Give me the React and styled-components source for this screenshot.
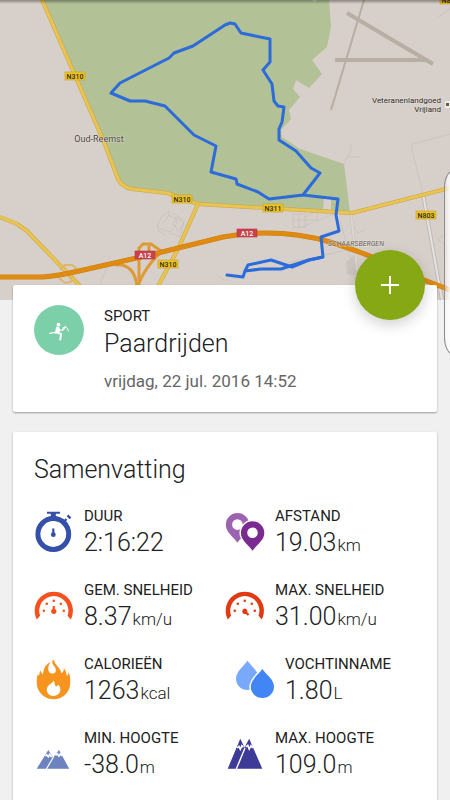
import React from 'react';
import styled, { createGlobalStyle } from 'styled-components';

const GlobalStyle = createGlobalStyle`
    * {
        box-sizing: border-box;
    }
    body {
        margin: 0;
        background-color: #f0f0f0;
        color: #212121;
        font-family: Roboto, "Liberation Sans", sans-serif;
    }
`

const Page = styled.div`
    position: relative;
    display: flex;
    flex-direction: column;
    min-height: 100vh;
    overflow: hidden;
`

const MapArea = styled.div`
    height: 300px;
    background-color: #d7cfc9;
`

const MapDrawing = styled.svg`
    display: block;
    width: 100%;
    height: 100%;
`

const Content = styled.main`
    position: relative;
    display: flex;
    flex: 1;
    flex-direction: column;
    gap: 20px;
    margin-top: -15px;
    padding: 0 13px;
`

const Card = styled.section`
    position: relative;
    padding: 20px 21px;
    flex: ${({grow}) => grow ? '1' : 'none' };
    border-radius: ${({grow}) => grow ? '2px 2px 0 0' : '2px' };
    background-color: #ffffff;
    box-shadow: 0 1px 2px rgba(0, 0, 0, 0.36);
`

const ActivityCard = styled(Card)`
    display: flex;
    align-items: flex-start;
    gap: 20px;
`

const SummaryCard = styled(Card)`
    padding-bottom: 16px;
`

const SportBadge = styled.svg`
    flex: none;
    width: 50px;
    height: 50px;
`

const SportLabel = styled.p`
    margin: 0;
    font-size: 15px;
    line-height: 22px;
`

const Title = styled.h1`
    margin: 0;
    font-size: 25px;
    font-weight: 300;
    line-height: 34px;
`

const DateText = styled.p`
    margin: 9px 0 0;
    color: #666666;
    font-size: 17px;
    line-height: 22px;
`

const AddButton = styled.button`
    position: absolute;
    top: -35px;
    right: 12px;
    display: flex;
    align-items: center;
    justify-content: center;
    width: 70px;
    height: 70px;
    padding: 0;
    border: none;
    border-radius: 50%;
    background-color: #86a814;
    box-shadow: 0 5px 14px rgba(0, 0, 0, 0.18);
    cursor: pointer;
`

const SectionTitle = styled.h2`
    margin: 0 0 18px;
    font-size: 25px;
    font-weight: 300;
    line-height: 36px;
`

const StatGrid = styled.div`
    display: grid;
    grid-template-columns: 1fr 1fr;
    row-gap: 20px;
`

const StatItem = styled.div`
    display: flex;
    gap: 10px;
    padding-left: ${({inset}) => inset ? '10px' : '0' };
`

const StatIcon = styled.svg`
    flex: none;
    width: 40px;
    height: 54px;
`

const StatLabel = styled.p`
    margin: 0;
    font-size: 15px;
    line-height: 20px;
    white-space: nowrap;
`

const StatValue = styled.p`
    margin: 0;
    font-size: 25px;
    font-weight: 300;
    line-height: 34px;
    white-space: nowrap;
`

const Unit = styled.span`
    margin-left: 1px;
    font-size: 17px;
    line-height: 20px;
`

// edge panel that peeks in from the right side of the screen
const EdgeHandle = styled.div`
    position: absolute;
    top: 170px;
    right: -14px;
    width: 20px;
    height: 185px;
    border: 1px solid #8c8c8c;
    border-radius: 14px / 24px;
    background-image: linear-gradient(to right, rgba(255, 255, 255, 0.4), #ffffff 6px);
`

const ROUTE = 'M227 275L243 277L245 271L261 269H281L290 266L309 260L323 257L321 237L339 231L336 215L338 199L303 195L269 199L258 192L237 184L236 179L211 172L216 146L194 135L165 106L145 101H130L111 93L120 83L169 58L174 53L193 46L225 25L230 23L235 24L241 33L270 39V62L263 70L272 84L274 101L278 106L284 107L282 122L279 129V140L296 151L311 168L320 173L303 195'

function RoadSign({x, y, name, red}) {
    return (
    <g>
      <rect x={x - 10} y={y - 4} width="20" height="8" fill={red ? '#c8414b' : '#ecc428'} stroke={red ? '#b93a43' : '#c9a21c'} strokeWidth="0.6" />
      <text x={x} y={y + 3} fontSize="7" fontWeight="500" textAnchor="middle" fill={red ? '#ffffff' : '#2f2a14'}>{name}</text>
    </g>
    );
}

function Road({d, width, main}) {
    return (
    <g fill="none" strokeLinejoin="round">
      <path d={d} stroke={main ? '#c98013' : '#c9a448'} strokeWidth={width} />
      <path d={d} stroke={main ? '#e08a10' : '#eac450'} strokeWidth={width - 1} />
    </g>
    );
}

function RouteMap() {
    return (
    <MapDrawing viewBox="0 0 450 300" preserveAspectRatio="xMidYMid slice" role="img" aria-label="Route">
      <defs>
        <linearGradient id="topShade" x1="0" y1="0" x2="0" y2="1">
          <stop offset="0" stopColor="#000000" stopOpacity="0.35" />
          <stop offset="1" stopColor="#000000" stopOpacity="0" />
        </linearGradient>
      </defs>
      <rect width="450" height="300" fill="#d7cfc9" />
      <path d="M42 0H329L331 27L327 47L312 60L322 74L309 88L296 80L293 89L300 97L289 110L291 119L281 130L282 137L300 149L344 164L350 213L300 209L198 204L165 193L130 189L121 182L104 142Z" fill="#b2c196" />
      <path d="M312 0h6l-4 2zM324 198h7v12l-8-1z" fill="#d7cfc9" />

      <g fill="none" stroke="#b9aea3">
        <path d="M364 0L331 110" strokeWidth="2" />
        <path d="M347 13L433 64" strokeWidth="4" />
        <path d="M335 60H428" strokeWidth="4" />
      </g>
      <g fill="none" stroke="#c4bcb6" strokeWidth="0.6">
        <path d="M438 17L450 9M412 150V144L450 134M349 144l3 2-2 4M344 164l7-14M346 157h14" />
        <path d="M169 211v5l7 2 1 5-6 9-7-2-7-3 5-11zM169 215l-6 9M177 217l7 7-5 7-6-7zM173 213l11 8-4 16-11-4M157 230l10 6M109 262l-9 22M216 274l9 7" />
        <path d="M293 214h12v13h-12zM299 214v13M293 220h24v-7M305 217l8-4M297 229l42-17M354 226l4 7 7-3M340 220l12 44 5 25M284 264l72-16M450 232l-13 7 9 6v14M412 150l11 43" />
      </g>
      <path d="M346 262l10-8 4 22-13-2z" fill="#cbc3be" />
      <path d="M423 194L442 300" stroke="#bfb9b5" strokeWidth="4" />
      <path d="M423 194L442 300" stroke="#e6e2df" strokeWidth="2" />
      <path d="M351 213L357 270" stroke="#c6bfba" strokeWidth="3" />
      <path d="M351 213L357 270" stroke="#ddd7d2" strokeWidth="2" />

      <Road width={4} d="M42 0L104 142L118 179Q122 187 132 189L167 193L198 204L352 213L450 188" />
      <Road width={4} d="M0 217L17 224L27 231L80 286V300" />
      <Road width={4} d="M198 204L178 249L157 288" />
      <g fill="none" stroke="#dfb56d" strokeWidth="2">
        <path d="M60 270l5-5h7l5 4M58 277l7 6 6-1 1-6" />
      </g>
      <g fill="none" stroke="#dd9a35" strokeWidth="3">
        <path d="M115 265Q134 263 137 286" />
        <path d="M149 257V244" />
        <path d="M161 252Q146 266 139 283" />
        <path d="M161 251L151 244H143L139 248V300" />
      </g>
      <Road main width={5} d="M0 277H43Q57 276 79 271L154 254L223 237Q278 227 330 242Q378 257 416 277L450 290" />

      <path d={ROUTE} fill="none" stroke="#2c6bda" strokeWidth="3" strokeLinejoin="round" strokeLinecap="round" />
      <path d="M245 271L248 265L271 260L292 267L309 260L323 257" fill="none" stroke="#2c6bda" strokeWidth="3" strokeLinejoin="round" />

      <RoadSign x={75} y={76} name="N310" />
      <RoadSign x={182} y={199} name="N310" />
      <RoadSign x={168} y={264} name="N310" />
      <RoadSign x={273} y={208} name="N311" />
      <RoadSign x={426} y={215} name="N803" />
      <RoadSign x={450} y={0} name="N803" />
      <RoadSign x={145} y={255} name="A12" red />
      <RoadSign x={247} y={233} name="A12" red />

      <g stroke="#efebe8" strokeWidth="1" paintOrder="stroke" strokeOpacity="0.6">
        <text x="99" y="142" fontSize="9" fill="#4c433d" textAnchor="middle">Oud-Reemst</text>
        <text x="441" y="103" fontSize="8" fill="#2c2723" textAnchor="end">Veteranenlandgoed</text>
        <text x="441" y="112" fontSize="8" fill="#2c2723" textAnchor="end">Vrijland</text>
        <text x="356" y="246" fontSize="7" fill="#625a53" fontStyle="italic" textAnchor="middle">SCHAARSBERGEN</text>
      </g>
      <rect x="445" y="101" width="8" height="7" rx="1" fill="#efebe8" />
      <rect x="446" y="103" width="3" height="3" fill="#6b5d3f" />
      <rect width="450" height="4" fill="url(#topShade)" />
    </MapDrawing>
    );
}

function Stopwatch() {
    return (
    <g>
      <circle cx="19.3" cy="28" r="15.4" fill="none" stroke="#3450a8" strokeWidth="5" />
      <path d="M13 5.7h13v2.1h-4.2V12h-5V7.8H13z" fill="#3450a8" />
      <path d="M29 16.5l3.5-3.5M33.5 9.3l3 3" stroke="#3450a8" strokeWidth="2.4" />
      <path d="M28 13.5l5 4.5" stroke="#3450a8" strokeWidth="2.4" />
      <circle cx="19.3" cy="28.7" r="2.4" fill="#3450a8" />
      <path d="M19.3 22.5v6" stroke="#3450a8" strokeWidth="2.2" />
    </g>
    );
}

function Gauge({color, angle = 0}) {
    return (
    <g fill={color}>
      <path d="M2.8 39.5A19.1 19.1 0 1 1 36.8 39.5L33.5 35.7A14.6 14.6 0 1 0 6.1 35.7Z" />
      <circle cx="9.8" cy="30.8" r="1.3" />
      <circle cx="12.8" cy="23.8" r="1.3" />
      <circle cx="19.8" cy="20.7" r="1.3" />
      <circle cx="26.8" cy="23.8" r="1.3" />
      <circle cx="29.8" cy="30.8" r="1.3" />
      <g transform={`rotate(${angle} 19.8 31.3)`}>
        <circle cx="19.8" cy="31.3" r="2.6" />
        <path d="M18.7 26h2.2v5h-2.2z" />
      </g>
    </g>
    );
}

function Pins() {
    return (
    <g fillRule="evenodd">
      <path d="M12.4 36.8C9 31 .8 26.5 .8 18.7a11.7 11.7 0 0 1 23.4 0C24.2 26.5 15.8 31 12.4 36.8zM12.4 13.3a5.3 5.3 0 1 0 0 10.6a5.3 5.3 0 0 0 0-10.6z" fill="#9c63b0" />
      <path d="M27.5 44.8C24.1 39 15.9 34.8 15.9 27a11.7 11.7 0 0 1 23.4 0C39.3 34.8 30.9 39 27.5 44.8z" fill="#ffffff" stroke="#ffffff" strokeWidth="3" />
      <path d="M27.5 44.8C24.1 39 15.9 34.8 15.9 27a11.7 11.7 0 0 1 23.4 0C39.3 34.8 30.9 39 27.5 44.8zM27.5 21.4a5.3 5.3 0 1 0 0 10.6a5.3 5.3 0 0 0 0-10.6z" fill="#7b2a92" />
    </g>
    );
}

function Flame() {
    return (
    <g>
      <path d="M20 5.7C16 8 11.5 10.5 10 15C9.3 17.5 9.3 19 8.8 20.5C7.5 19.5 7 18 7 16.3C5.3 18.5 5.3 20 5 21.8L3.6 20.6C3 23 2.7 25.5 2.7 28.5C2.7 38 10.5 45.3 19.6 45.3C29 45.3 36.3 38 36.3 28.5C36.3 25 36 21 34.6 18C34.4 20 33.8 21.3 32.8 22C32.4 19 31.8 16 29.8 14.2C30 17 29 18.5 27.2 19.3C27 13.5 20.5 11.5 20 5.7Z" fill="#f7941e" />
      <path d="M18.2 5.5C12.5 12 13.2 19.6 18.3 19.6C22.4 19.6 22.8 15.3 20.4 12.4C18.7 10.4 18 8.8 18.2 5.5Z" fill="#ffffff" />
      <path d="M19.8 26.5C18 30 12.8 30.8 12.8 35.8C12.8 39.5 15.8 42 19.4 42C23.3 42 26.4 39.3 26.4 35.6C26.4 33.3 25.4 31.5 24 30.5C23.8 31.5 23.2 32.3 22.2 32.6C20.5 31.5 20.8 28.8 19.8 26.5Z" fill="#ffffff" />
    </g>
    );
}

function Drops() {
    return (
    <g>
      <path d="M12.5 6.8C16.5 12.5 24 17.5 24 24.8A11.5 11.3 0 0 1 1 24.8C1 17.5 8.5 12.5 12.5 6.8z" fill="#78a9fa" />
      <path d="M27.3 15C31.3 20.7 39 25.3 39 32.8A11.6 11.3 0 0 1 15.8 32.8C15.8 25.3 23.3 20.7 27.3 15z" fill="#4285f4" stroke="#ffffff" strokeWidth="3" paintOrder="stroke" />
    </g>
    );
}

function LowMountains() {
    return (
    <g>
      <path d="M2.7 40.7L14.3 22L19 29.5L25 22L35.2 40.7Z" fill="#6d83bf" />
      <path d="M12.4 41L19.8 28.5" stroke="#ffffff" strokeWidth="1.2" />
      <path d="M11.4 28l1.3-1.2 1.6 2.1 1.4-2.6 1.5 2.1 1 .1M21.4 27.4l1.9-1.6 1.6 2.3 1.4-2.2 1.8 2" fill="none" stroke="#ffffff" strokeWidth="1.6" />
    </g>
    );
}

function HighMountains() {
    return (
    <g>
      <path d="M2.7 40.7L15.3 10.7L19.5 19.5L24.2 10.7L37.3 40.7Z" fill="#3e3a98" />
      <path d="M11.3 41L20 20" stroke="#ffffff" strokeWidth="1.4" />
      <path d="M12.2 20l1.7-1.7 1.4 3 1.6-3.6 1.6 1.6M20.8 19l2-1.6 1.4 3.6 1.8-3.4 1.9 2.4" fill="none" stroke="#ffffff" strokeWidth="1.6" />
    </g>
    );
}

const stats = [
    { label: 'DUUR', value: '2:16:22', icon: <Stopwatch /> },
    { label: 'AFSTAND', value: '19.03', unit: 'km', icon: <Pins /> },
    { label: 'GEM. SNELHEID', value: '8.37', unit: 'km/u', icon: <Gauge color="#f4511e" /> },
    { label: 'MAX. SNELHEID', value: '31.00', unit: 'km/u', icon: <Gauge color="#e03a12" angle={135} /> },
    { label: 'CALORIEËN', value: '1263', unit: 'kcal', icon: <Flame /> },
    { label: 'VOCHTINNAME', value: '1.80', unit: 'L', icon: <Drops />, inset: true },
    { label: 'MIN. HOOGTE', value: '-38.0', unit: 'm', icon: <LowMountains /> },
    { label: 'MAX. HOOGTE', value: '109.0', unit: 'm', icon: <HighMountains /> },
]

function Stat({label, value, unit, icon, inset}) {
    return (
    <StatItem inset={inset ? 1 : undefined}>
      <StatIcon viewBox="0 0 40 54" aria-hidden="true">{icon}</StatIcon>
      <div>
        <StatLabel>{label}</StatLabel>
        <StatValue>{value}{unit && <Unit>{unit}</Unit>}</StatValue>
      </div>
    </StatItem>
    );
}

function App() {
    return (
    <Page>
      <GlobalStyle />
      <MapArea>
        <RouteMap />
      </MapArea>
      <Content>
        <ActivityCard>
          <SportBadge viewBox="0 0 50 50" aria-hidden="true">
            <circle cx="25" cy="25" r="25" fill="#7bcfa9" />
            <circle cx="24.5" cy="19.7" r="1.9" fill="#ffffff" />
            <path d="M22 22.2q2-1.4 3.3.4l1 3-1.5 2.6-3.8-.3z" fill="#ffffff" />
            <g fill="none" stroke="#ffffff" strokeLinecap="round" strokeLinejoin="round">
              <path d="M22 27.3l5 1.6-.7 5.6" strokeWidth="2" />
              <path d="M25 25l4 .2 2.2-3.4" strokeWidth="1.2" />
              <path d="M28.6 23.2l2.8-1.8 1.7 1.6 1.3 3" strokeWidth="1" />
              <path d="M15.6 28.6q3-1.4 6.4-.8" strokeWidth="1.2" />
            </g>
          </SportBadge>
          <div>
            <SportLabel>SPORT</SportLabel>
            <Title>Paardrijden</Title>
            <DateText>vrijdag, 22 jul. 2016 14:52</DateText>
          </div>
          <AddButton type="button" aria-label="Toevoegen">
            <svg width="18" height="18" viewBox="0 0 18 18" aria-hidden="true">
              <path d="M9 0v18M0 9h18" stroke="#ffffff" strokeWidth="2" />
            </svg>
          </AddButton>
        </ActivityCard>
        <SummaryCard grow={1}>
          <SectionTitle>Samenvatting</SectionTitle>
          <StatGrid>
            {stats.map((stat) => <Stat key={stat.label} {...stat} />)}
          </StatGrid>
        </SummaryCard>
      </Content>
      <EdgeHandle />
    </Page>
    );
}

export default App;
